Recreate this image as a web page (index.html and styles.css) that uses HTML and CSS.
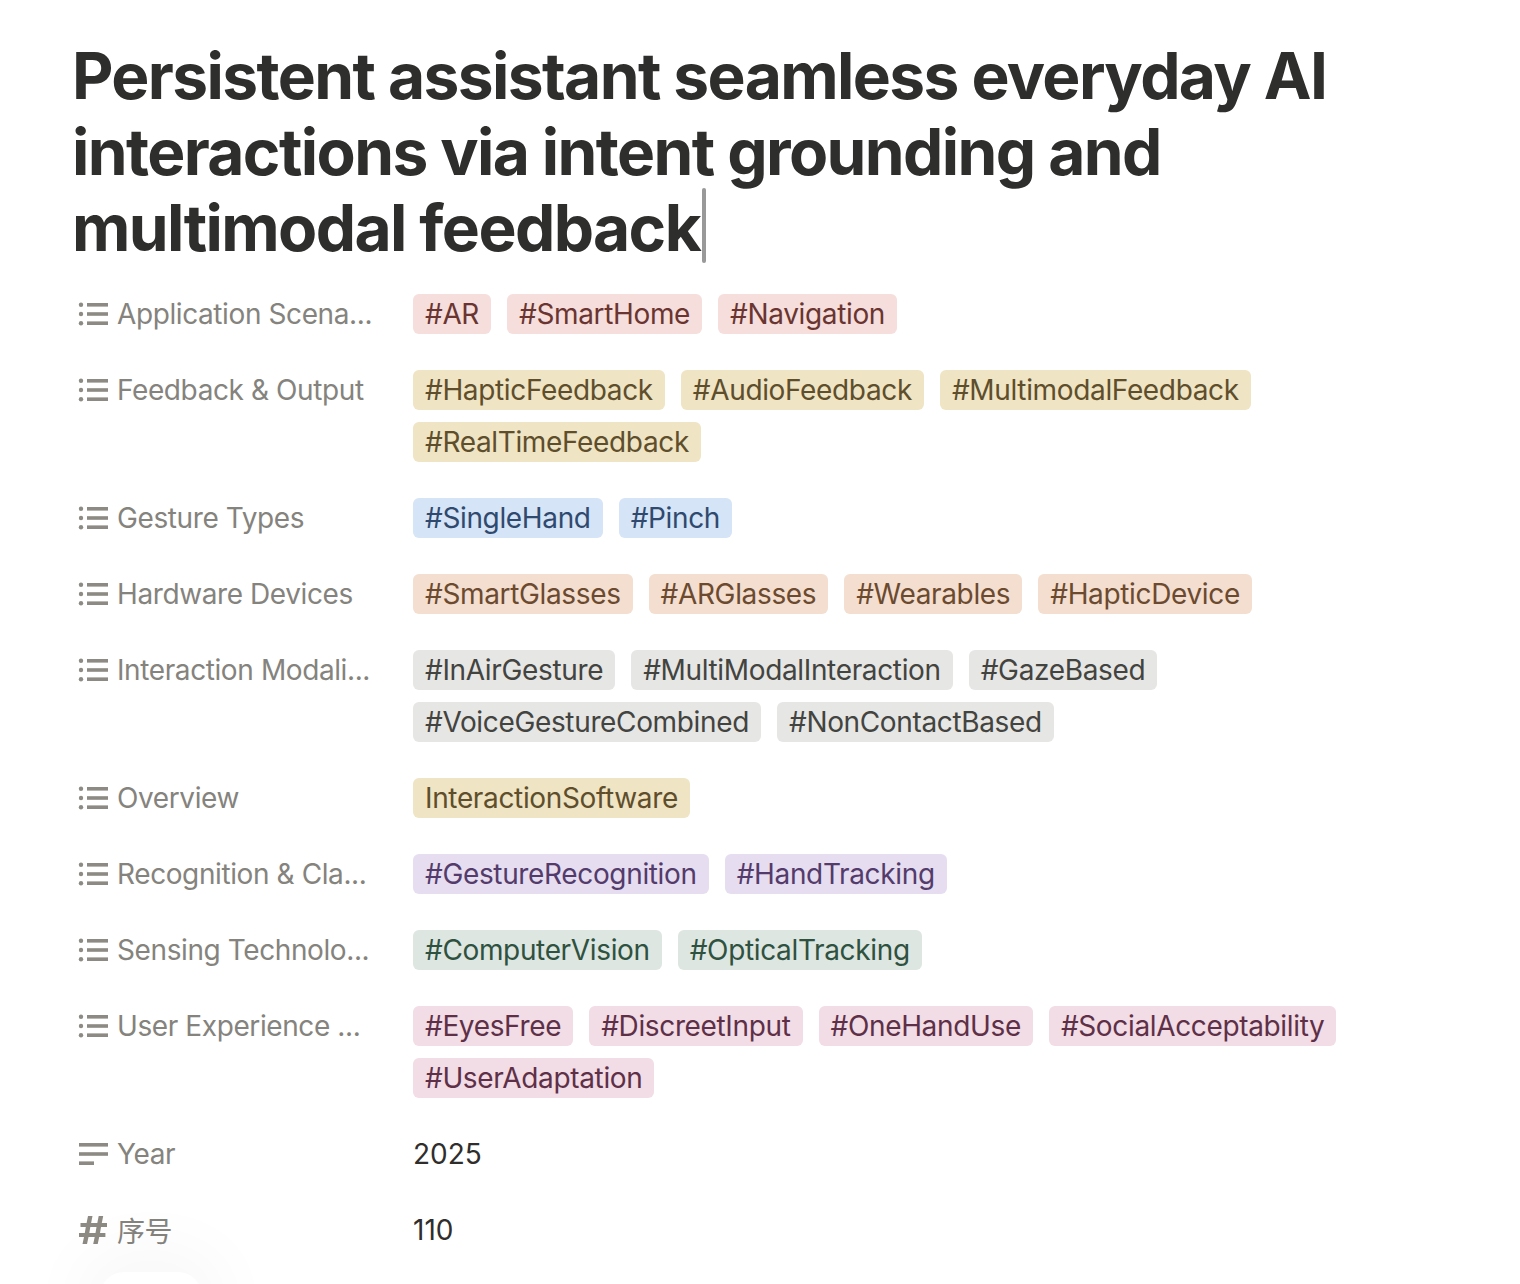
FILE: index.html
```html
<!DOCTYPE html>
<html lang="en">
<head>
  <meta charset="UTF-8">
  <title>Persistent assistant</title>
  <link rel="stylesheet" href="styles.css">
</head>
<body>
  <svg width="0" height="0" class="defs">
    <symbol id="icon-list" viewBox="0 0 30 24">
      <circle cx="3" cy="2.800" r="2.200"/><circle cx="3" cy="12" r="2.200"/><circle cx="3" cy="21.200" r="2.200"/>
      <rect x="9" y="1" width="21" height="3.600"/><rect x="9" y="10.200" width="21" height="3.600"/><rect x="9" y="19.400" width="21" height="3.600"/>
    </symbol>
    <symbol id="icon-text" viewBox="0 0 30 24">
      <rect x="1" y="1" width="29" height="3.600"/><rect x="1" y="10.200" width="29" height="3.600"/><rect x="1" y="19.400" width="15" height="3.600"/>
    </symbol>
    <symbol id="icon-number" viewBox="0 0 30 30">
      <path d="M10 1h4.500l-1.400 7h6.200l1.400-7h4.500l-1.400 7h5.200v4h-6l-1 6h5.400v4h-6.200l-1.500 7h-4.500l1.500-7h-6.200l-1.500 7H4.500l1.500-7H1v-4h5.800l1-6H2.500V8h6.100zM12.300 12l-1 6h6.200l1-6z"/>
    </symbol>
  </svg>

  <div class="page">
    <h1 class="title">Persistent assistant seamless everyday AI interactions via intent grounding and multimodal feedback<span class="caret"></span></h1>

    <div class="props">
      <div class="row">
        <div class="label"><svg class="icon"><use href="#icon-list"/></svg><span>Application Scena...</span></div>
        <div class="tags">
          <span class="tag red">#AR</span><span class="tag red">#SmartHome</span><span class="tag red">#Navigation</span>
        </div>
      </div>
      <div class="row">
        <div class="label"><svg class="icon"><use href="#icon-list"/></svg><span>Feedback &amp; Output</span></div>
        <div class="tags">
          <span class="tag yellow">#HapticFeedback</span><span class="tag yellow">#AudioFeedback</span><span class="tag yellow">#MultimodalFeedback</span><span class="tag yellow">#RealTimeFeedback</span>
        </div>
      </div>
      <div class="row">
        <div class="label"><svg class="icon"><use href="#icon-list"/></svg><span>Gesture Types</span></div>
        <div class="tags">
          <span class="tag blue">#SingleHand</span><span class="tag blue">#Pinch</span>
        </div>
      </div>
      <div class="row">
        <div class="label"><svg class="icon"><use href="#icon-list"/></svg><span>Hardware Devices</span></div>
        <div class="tags">
          <span class="tag orange">#SmartGlasses</span><span class="tag orange">#ARGlasses</span><span class="tag orange">#Wearables</span><span class="tag orange">#HapticDevice</span>
        </div>
      </div>
      <div class="row">
        <div class="label"><svg class="icon"><use href="#icon-list"/></svg><span>Interaction Modali...</span></div>
        <div class="tags">
          <span class="tag gray">#InAirGesture</span><span class="tag gray">#MultiModalInteraction</span><span class="tag gray">#GazeBased</span><span class="tag gray">#VoiceGestureCombined</span><span class="tag gray">#NonContactBased</span>
        </div>
      </div>
      <div class="row">
        <div class="label"><svg class="icon"><use href="#icon-list"/></svg><span>Overview</span></div>
        <div class="tags">
          <span class="tag yellow">InteractionSoftware</span>
        </div>
      </div>
      <div class="row">
        <div class="label"><svg class="icon"><use href="#icon-list"/></svg><span>Recognition &amp; Cla...</span></div>
        <div class="tags">
          <span class="tag purple">#GestureRecognition</span><span class="tag purple">#HandTracking</span>
        </div>
      </div>
      <div class="row">
        <div class="label"><svg class="icon"><use href="#icon-list"/></svg><span>Sensing Technolo...</span></div>
        <div class="tags">
          <span class="tag green">#ComputerVision</span><span class="tag green">#OpticalTracking</span>
        </div>
      </div>
      <div class="row">
        <div class="label"><svg class="icon"><use href="#icon-list"/></svg><span>User Experience ...</span></div>
        <div class="tags">
          <span class="tag pink">#EyesFree</span><span class="tag pink">#DiscreetInput</span><span class="tag pink">#OneHandUse</span><span class="tag pink">#SocialAcceptability</span><span class="tag pink">#UserAdaptation</span>
        </div>
      </div>
      <div class="row">
        <div class="label"><svg class="icon"><use href="#icon-text"/></svg><span>Year</span></div>
        <div class="value">2025</div>
      </div>
      <div class="row">
        <div class="label"><svg class="icon icon-num"><use href="#icon-number"/></svg><span>序号</span></div>
        <div class="value">110</div>
      </div>
    </div>
  </div>

  <div class="floater"></div>
</body>
</html>
```

FILE: styles.css
```css
html, body {
  margin: 0;
  height: 100%;
}
body {
  background: #fff;
  font-family: Inter, "Noto Sans CJK SC", sans-serif;
  color: #2f2e2c;
  overflow: hidden;
  position: relative;
}
.defs {
  display: none;
}
.page {
  padding: 38px 150px 0 72px;
}
.title {
  margin: 0 0 28px;
  font-size: 64px;
  line-height: 76px;
  font-weight: 700;
  letter-spacing: -1.6px;
  color: #2e2e2c;
}
.caret {
  display: inline-block;
  width: 4px;
  height: 75px;
  margin-left: 2px;
  margin-top: -2px;
  margin-right: -6px;
  background: #999;
  border-radius: 2px;
  vertical-align: top;
}
.row {
  display: flex;
  align-items: flex-start;
  padding-bottom: 36px;
}
.label {
  width: 341px;
  flex: none;
  height: 40px;
  display: flex;
  align-items: center;
  gap: 9px;
  padding-left: 6px;
  box-sizing: border-box;
  color: #85837d;
  font-size: 28px;
  letter-spacing: -0.4px;
}
.icon {
  width: 30px;
  height: 24px;
  flex: none;
  fill: #8c8a83;
}
.icon-num {
  height: 30px;
}
.tags {
  display: flex;
  flex-wrap: wrap;
  gap: 12px 16px;
  max-width: 960px;
}
.tag {
  height: 40px;
  line-height: 40px;
  padding: 0 12px;
  border-radius: 6px;
  font-size: 28px;
  letter-spacing: -0.35px;
  white-space: nowrap;
}
.value {
  height: 40px;
  line-height: 40px;
  font-size: 28px;
}
.red { background: #f5dedc; color: #6a3530; }
.yellow { background: #efe4c3; color: #5e4e2c; }
.blue { background: #d5e4f6; color: #2f4a6e; }
.orange { background: #f3decf; color: #6b4a2f; }
.gray { background: #e6e6e4; color: #434340; }
.purple { background: #e6ddf0; color: #533b6b; }
.green { background: #dde6e0; color: #2f5140; }
.pink { background: #f2dce5; color: #5e3048; }
.floater {
  position: absolute;
  left: 100px;
  top: 1272px;
  width: 102px;
  height: 60px;
  background: #fff;
  border-radius: 24px;
  box-shadow: 0 0 70px 20px rgba(0, 0, 0, 0.035);
}
```
